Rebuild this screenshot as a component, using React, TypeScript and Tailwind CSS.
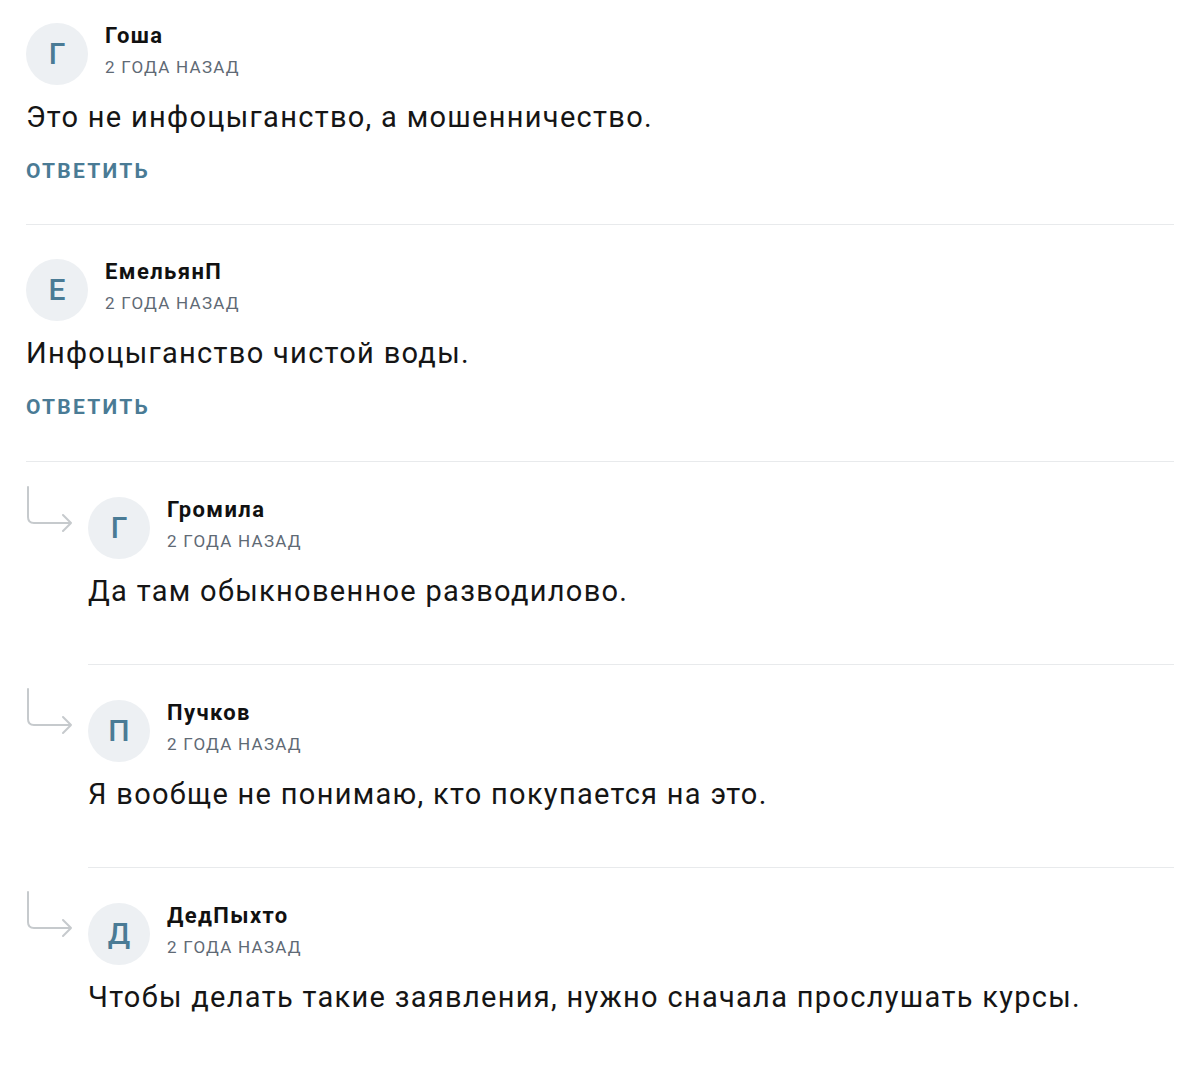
type Comment = {
  author: string
  date: string
  text: string
}

const comments: (Comment & { replies?: Comment[] })[] = [
  {
    author: 'Гоша',
    date: '2 года назад',
    text: 'Это не инфоцыганство, а мошенничество.',
  },
  {
    author: 'ЕмельянП',
    date: '2 года назад',
    text: 'Инфоцыганство чистой воды.',
    replies: [
      {
        author: 'Громила',
        date: '2 года назад',
        text: 'Да там обыкновенное разводилово.',
      },
      {
        author: 'Пучков',
        date: '2 года назад',
        text: 'Я вообще не понимаю, кто покупается на это.',
      },
      {
        author: 'ДедПыхто',
        date: '2 года назад',
        text: 'Чтобы делать такие заявления, нужно сначала прослушать курсы.',
      },
    ],
  },
]

function Avatar({ name }: { name: string }) {
  return (
    <div className="flex h-[62px] w-[62px] flex-shrink-0 items-center justify-center rounded-full bg-[#edf0f3] text-[30px] font-medium leading-none text-[#4a7b95]">
      {name[0]}
    </div>
  )
}

function Header({ c }: { c: Comment }) {
  return (
    <div className="flex items-start gap-[17px]">
      <Avatar name={c.author} />
      <div className="-mt-[2px]">
        <p className="text-[22px] font-bold leading-[30px] tracking-[1.4px] text-[#111]">{c.author}</p>
        <p className="mt-[1px] text-[17px] uppercase leading-[30px] tracking-[1.25px] text-[#5f6a75]">
          {c.date}
        </p>
      </div>
    </div>
  )
}

function ReplyArrow() {
  return (
    <svg width="50" height="48" viewBox="0 0 50 48" fill="none">
      <path
        d="M2 1 V31 Q2 37 8 37 H45 M37 29 L45 37 L37 45"
        stroke="#c6cacd"
        strokeWidth="2"
        strokeLinecap="round"
        strokeLinejoin="round"
      />
    </svg>
  )
}

export default function App() {
  return (
    <div
      className="min-h-[1087px] bg-white px-[26px] pt-[23px]"
      style={{ fontFamily: 'Roboto, "Noto Sans", sans-serif' }}
    >
      {comments.map((c, i) => (
        <div key={c.author}>
          <div
            className={`border-b border-[#e8eaec] ${i > 0 ? 'pb-[40px] pt-[34px]' : 'pb-[39px]'}`}
          >
            <Header c={c} />
            <p className="mt-[12px] text-[29px] leading-[40px] tracking-[1.3px] text-[#151515]">{c.text}</p>
            <button className="mt-[20px] block text-[21px] font-bold uppercase leading-[28px] tracking-[2.25px] text-[#4a7b95]">
              Ответить
            </button>
          </div>
          {c.replies?.map((r, j) => (
            <div key={r.author} className="flex">
              <div className="w-[62px] flex-shrink-0 pt-[24px]">
                <ReplyArrow />
              </div>
              <div className={`flex-1 pb-[53px] pt-[35px] ${j > 0 ? 'border-t border-[#e8eaec]' : ''}`}>
                <Header c={r} />
                <p className="mt-[12px] text-[29px] leading-[40px] tracking-[1.3px] text-[#151515]">{r.text}</p>
              </div>
            </div>
          ))}
        </div>
      ))}
    </div>
  )
}
